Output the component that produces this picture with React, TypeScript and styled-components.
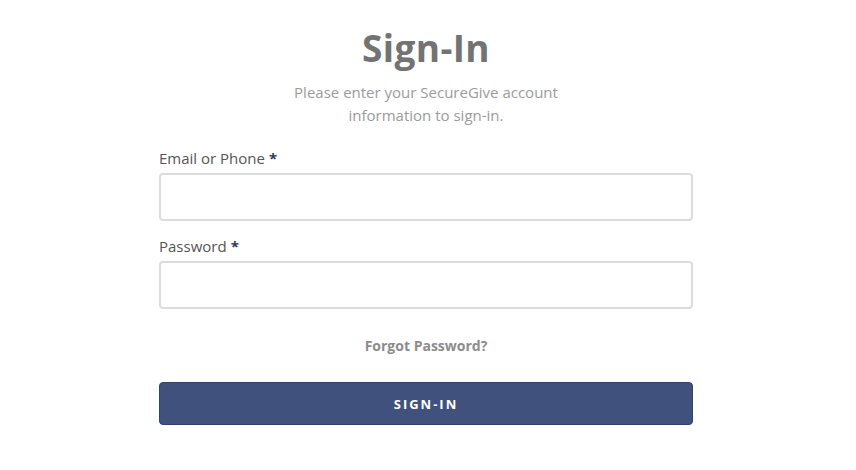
import React from "react";
import styled, { createGlobalStyle } from "styled-components";

const Global = createGlobalStyle`
  html, body { margin: 0; padding: 0; background: #ffffff; }
  body { font-family: "Open Sans", "Noto Sans", Arial, sans-serif; }
  * { box-sizing: border-box; }
`;

const Page = styled.div`
  width: 856px;
  height: 470px;
  padding: 24px 4px 0 0;
  display: flex;
  justify-content: center;
`;

const Form = styled.form`
  width: 534px;
  display: flex;
  flex-direction: column;
`;

const Title = styled.h1`
  margin: 0;
  text-align: center;
  font-size: 37px;
  line-height: 48px;
  font-weight: 700;
  color: #737373;
  letter-spacing: 0.4px;
`;

const Subtitle = styled.p`
  margin: 9px 0 0;
  text-align: center;
  font-size: 15px;
  line-height: 23px;
  color: #9b9b9b;
`;

const Field = styled.div<{ $first?: boolean }>`
  display: flex;
  flex-direction: column;
  margin-top: ${(p) => (p.$first ? "21px" : "15px")};
`;

const Label = styled.label`
  font-size: 15px;
  line-height: 20px;
  color: #555555;
  margin-bottom: 5px;
`;

const Req = styled.span`
  color: #2e3a5c;
  font-weight: 700;
  margin-left: 4px;
`;

const Input = styled.input`
  width: 100%;
  height: 48px;
  border: 2px solid #dcdcdc;
  border-radius: 4px;
  padding: 0 12px;
  font-size: 15px;
  outline: none;
  background: #fff;
`;

const Forgot = styled.a`
  margin-top: 27px;
  align-self: center;
  font-size: 14px;
  line-height: 20px;
  font-weight: 700;
  color: #8c8c8c;
  text-decoration: none;
  cursor: pointer;
`;

const Submit = styled.button`
  margin-top: 26px;
  width: 100%;
  height: 43px;
  border: 1px solid #33426a;
  border-radius: 4px;
  background: #3f517c;
  color: #ffffff;
  font-family: inherit;
  font-size: 13px;
  font-weight: 700;
  letter-spacing: 2px;
  cursor: pointer;
`;

export default function App() {
  return (
    <>
      <Global />
      <Page>
        <Form onSubmit={(e) => e.preventDefault()}>
          <Title>Sign-In</Title>
          <Subtitle>
            Please enter your SecureGive account
            <br />
            information to sign-in.
          </Subtitle>
          <Field $first>
            <Label>
              Email or Phone<Req>*</Req>
            </Label>
            <Input type="text" />
          </Field>
          <Field>
            <Label>
              Password<Req>*</Req>
            </Label>
            <Input type="password" />
          </Field>
          <Forgot>Forgot Password?</Forgot>
          <Submit type="submit">SIGN-IN</Submit>
        </Form>
      </Page>
    </>
  );
}
